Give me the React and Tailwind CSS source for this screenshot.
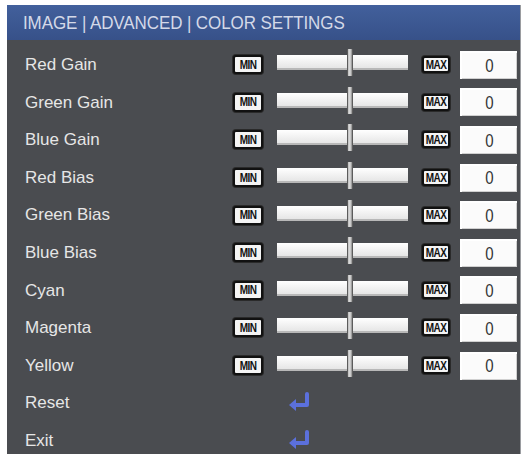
import React from "react";

const sliders = [
  "Red Gain",
  "Green Gain",
  "Blue Gain",
  "Red Bias",
  "Green Bias",
  "Blue Bias",
  "Cyan",
  "Magenta",
  "Yellow",
];

function Tag({ text, w, h }) {
  return (
    <div
      className={`${w} ${h} flex items-center justify-center rounded-[3px] border-2 border-[#111] bg-[#f4f4f4] shadow-[0_0_0_1px_#2a2a2a]`}
    >
      <span className="text-[10px] font-bold leading-none tracking-[-0.6px] text-[#111] scale-y-125">
        {text}
      </span>
    </div>
  );
}

function Slider() {
  return (
    <div className="relative ml-[14px] h-[15px] w-[131px] -translate-y-[2px] border-b-2 border-[#b8b8b8] bg-gradient-to-b from-[#ffffff] to-[#e6e6e6]">
      <div className="absolute left-[70px] top-[-6px] h-[27px] w-[6px] rounded-[1px] border-x border-[#5c5c5c] bg-gradient-to-r from-[#bdbdbd] via-[#e0e0e0] to-[#8c8c8c]" />
    </div>
  );
}

function EnterIcon() {
  return (
    <svg width="26" height="22" viewBox="0 0 26 22" className="ml-[54px]">
      <path
        d="M20 2 V13 H8"
        fill="none"
        stroke="#5b70dc"
        strokeWidth="4"
        strokeLinecap="round"
        strokeLinejoin="round"
      />
      <path d="M2 13 L9 7 L9 19 Z" fill="#5b70dc" />
    </svg>
  );
}

export default function App() {
  return (
    <div className="h-[454px] w-[526px] overflow-hidden bg-white pl-[7px] pt-[5px] font-['Liberation_Sans',Arial,sans-serif]">
      <div className="h-[460px] w-[514px] border-r border-[#9a9ca0] bg-[#4a4c50]">
        <div className="flex h-[35px] items-center bg-gradient-to-b from-[#42609c] to-[#375189] pl-[16px]">
          <span className="text-[17px] tracking-[-0.1px] text-[#d4d9e8] scale-y-110">
            IMAGE | ADVANCED | COLOR SETTINGS
          </span>
        </div>
        <div className="pt-[6px]">
          {sliders.map((label) => (
            <div key={label} className="flex h-[37.6px] items-center pl-[18px]">
              <span className="w-[208px] text-[17px] text-[#e6e6e6]">
                {label}
              </span>
              <Tag text="MIN" w="w-[30px]" h="h-[19px]" />
              <Slider />
              <div className="ml-[14px]">
                <Tag text="MAX" w="w-[28px]" h="h-[17px]" />
              </div>
              <div className="ml-[10px] flex h-[28px] w-[57px] items-center justify-center border-l-2 border-t-2 border-[#ffffff] bg-[#fbfbfb] shadow-[inset_-1px_-1px_0_#d0d0d0]">
                <span className="text-[15px] text-[#333] scale-y-125">0</span>
              </div>
            </div>
          ))}
          {["Reset", "Exit"].map((label) => (
            <div key={label} className="flex h-[37.6px] items-center pl-[18px]">
              <span className="w-[208px] text-[17px] text-[#e6e6e6]">
                {label}
              </span>
              <EnterIcon />
            </div>
          ))}
        </div>
      </div>
    </div>
  );
}
